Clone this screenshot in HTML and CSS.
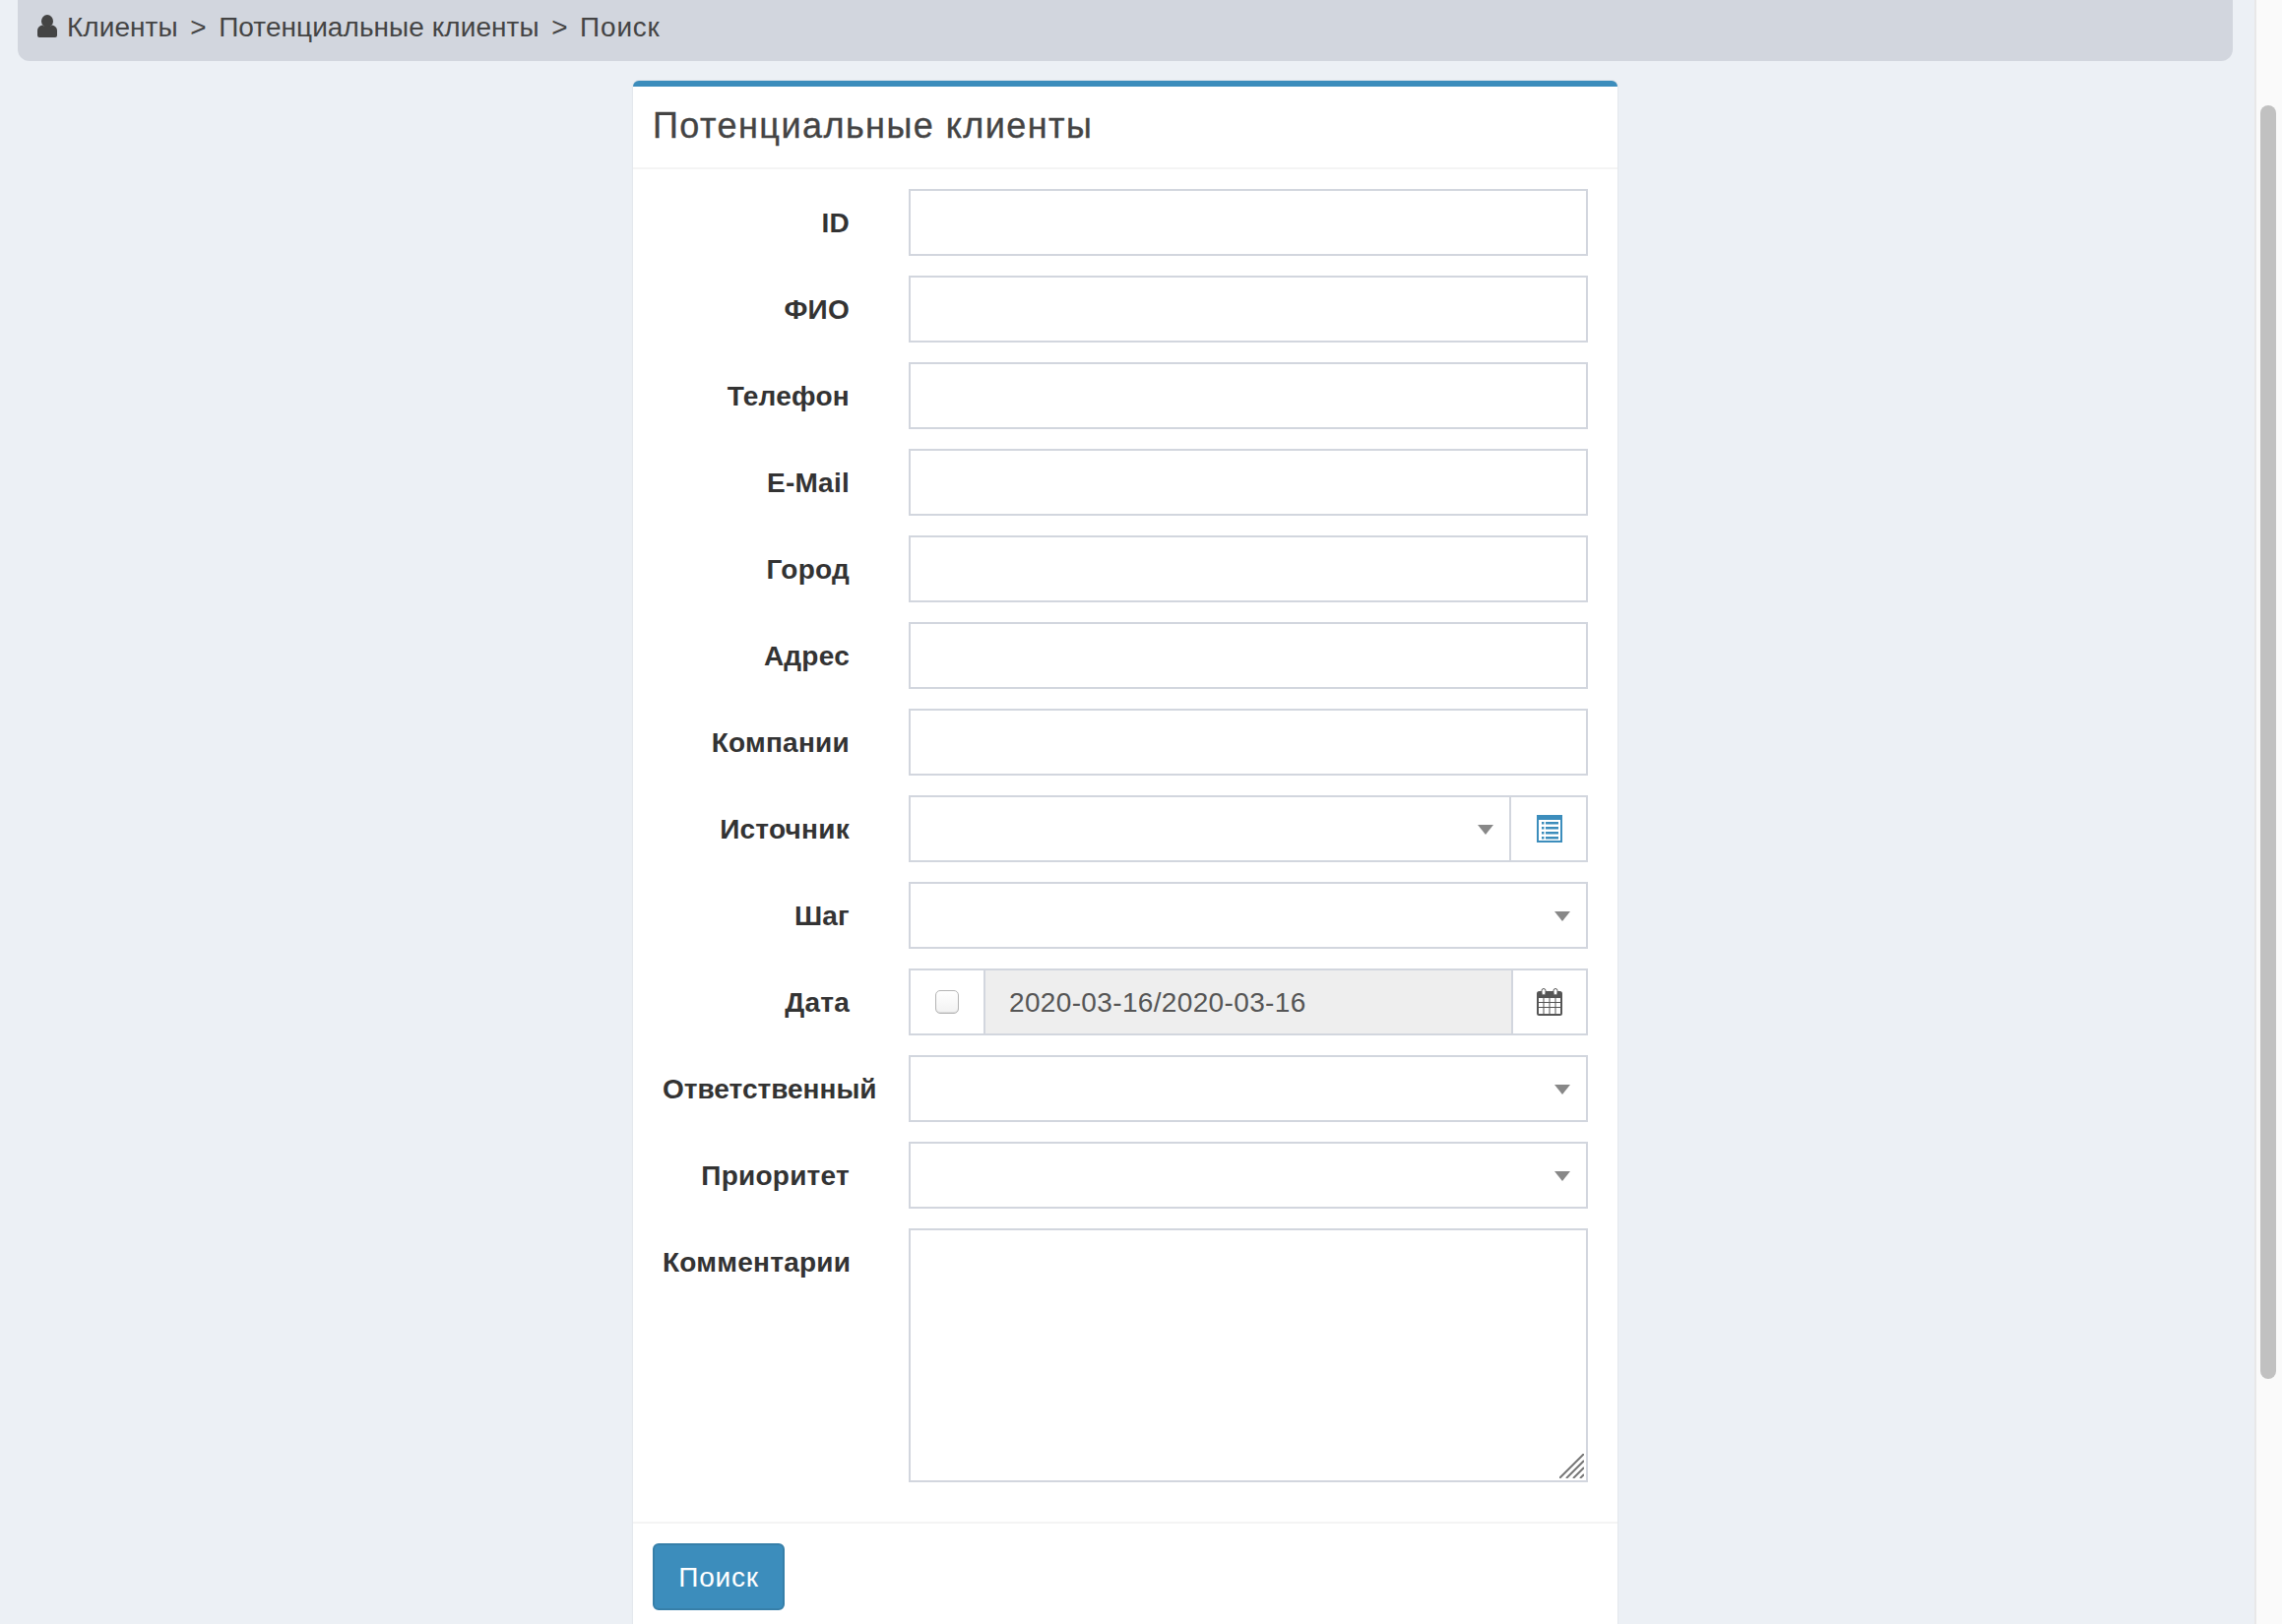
FILE: index.html
```html
<!DOCTYPE html>
<html lang="ru">
<head>
<meta charset="utf-8">
<title>Поиск</title>
<link rel="stylesheet" href="styles.css">
</head>
<body>
<div class="page">
  <main class="content">
    <nav class="crumbs">
      <svg class="crumb-icon" viewBox="0 0 20 23" aria-hidden="true"><ellipse cx="10" cy="6.500" rx="6" ry="6.500"/><path d="M2 23a2 2 0 0 1-2-2v-5c0-3 2-4.500 5-5.500 1.500 1 3 1.500 5 1.500s3.500-.5 5-1.500c3 1 5 2.500 5 5.500v5a2 2 0 0 1-2 2z"/></svg>
      <span>Клиенты</span><span class="sep">&gt;</span><span>Потенциальные клиенты</span><span class="sep">&gt;</span><span class="wide">Поиск</span>
    </nav>
    <section class="box">
      <header class="box-header"><h3 class="box-title">Потенциальные клиенты</h3></header>
      <form class="box-body">
        <div class="row"><label class="lbl">ID</label><input class="ctl" type="text"></div>
        <div class="row"><label class="lbl">ФИО</label><input class="ctl" type="text"></div>
        <div class="row"><label class="lbl">Телефон</label><input class="ctl" type="text"></div>
        <div class="row"><label class="lbl">E-Mail</label><input class="ctl" type="text"></div>
        <div class="row"><label class="lbl">Город</label><input class="ctl" type="text"></div>
        <div class="row"><label class="lbl">Адрес</label><input class="ctl" type="text"></div>
        <div class="row"><label class="lbl">Компании</label><input class="ctl" type="text"></div>
        <div class="row"><label class="lbl">Источник</label>
          <div class="ctl group">
            <div class="select"><i class="caret"></i></div>
            <div class="addon addon-list">
              <svg class="ico" viewBox="0 0 26 28" aria-hidden="true"><rect width="26" height="28" fill="#3c8dbc"/><rect x="2" y="5" width="22" height="21" fill="#fff"/><g fill="#3c8dbc"><rect x="5" y="7" width="2.500" height="2.500"/><rect x="9" y="7" width="13" height="2.500"/><rect x="5" y="12" width="2.500" height="2.500"/><rect x="9" y="12" width="13" height="2.500"/><rect x="5" y="17" width="2.500" height="2.500"/><rect x="9" y="17" width="13" height="2.500"/><rect x="5" y="22" width="2.500" height="2.500"/><rect x="9" y="22" width="13" height="2.500"/></g></svg>
            </div>
          </div>
        </div>
        <div class="row"><label class="lbl">Шаг</label><div class="ctl select"><i class="caret"></i></div></div>
        <div class="row"><label class="lbl">Дата</label>
          <div class="ctl group">
            <div class="check-cell"><span class="check"></span></div>
            <div class="date">2020-03-16/2020-03-16</div>
            <div class="addon addon-cal">
              <svg class="ico" viewBox="0 0 26 28" aria-hidden="true"><path fill="#555" d="M2.500 3H5v3.500h4V3h8v3.500h4V3h2.500A2.500 2.500 0 0 1 26 5.500v20a2.500 2.500 0 0 1-2.500 2.500h-21A2.500 2.500 0 0 1 0 25.500v-20A2.500 2.500 0 0 1 2.500 3z"/><rect x="5" y=".5" width="4" height="6.500" rx="2" fill="#fff" stroke="#555" stroke-width="1"/><rect x="17" y=".5" width="4" height="6.500" rx="2" fill="#fff" stroke="#555" stroke-width="1"/><g fill="#fff"><rect x="2" y="10" width="4.500" height="4"/><rect x="7.500" y="10" width="5" height="4"/><rect x="13.500" y="10" width="5" height="4"/><rect x="19.500" y="10" width="4.500" height="4"/><rect x="2" y="15" width="4.500" height="4"/><rect x="7.500" y="15" width="5" height="4"/><rect x="13.500" y="15" width="5" height="4"/><rect x="19.500" y="15" width="4.500" height="4"/><rect x="2" y="20" width="4.500" height="6"/><rect x="7.500" y="20" width="5" height="6"/><rect x="13.500" y="20" width="5" height="6"/><rect x="19.500" y="20" width="4.500" height="6"/></g></svg>
            </div>
          </div>
        </div>
        <div class="row"><label class="lbl lbl-tight">Ответственный</label><div class="ctl select"><i class="caret"></i></div></div>
        <div class="row"><label class="lbl">Приоритет</label><div class="ctl select"><i class="caret"></i></div></div>
        <div class="row"><label class="lbl">Комментарии</label>
          <div class="area-wrap">
            <textarea class="ctl area"></textarea>
            <svg class="grip" viewBox="0 0 25 25" aria-hidden="true"><path d="M0 25 25 0M7 25 25 7M14 25 25 14M21 25l4-4" stroke="#777" stroke-width="2" fill="none"/></svg>
          </div>
        </div>
      </form>
      <footer class="box-footer"><button class="btn" type="button">Поиск</button></footer>
    </section>
  </main>
  <aside class="scrollbar"><div class="thumb"></div></aside>
</div>
</body>
</html>
```
FILE: styles.css
```css
* { box-sizing: border-box; }
html, body { margin: 0; height: 100%; overflow: hidden; }
body {
  background: #ecf0f5;
  font-family: "Liberation Sans", Arial, sans-serif;
  font-size: 28px;
  color: #333;
}
.page { display: flex; height: 1650px; overflow: hidden; }
.content { flex: 1; padding: 0 22px 0 18px; min-width: 0; }
.crumbs {
  display: flex;
  align-items: center;
  height: 62px;
  padding: 0 0 6px 20px;
  background: #d2d6de;
  border-radius: 0 0 12px 12px;
  color: #444;
  line-height: 54px;
  letter-spacing: .06px;
}
.crumb-icon { width: 20px; height: 23px; fill: #444; margin: 0 10px 3px 0; }
.sep { margin: 0 12.500px; }
.wide { letter-spacing: .8px; }
.box {
  width: 1000px;
  margin: 20px auto 0;
  background: #fff;
  border-top: 6px solid #3c8dbc;
  border-radius: 6px 6px 0 0;
  box-shadow: 0 0 2px rgba(0, 0, 0, .12);
}
.box-header {
  height: 84px;
  padding: 0 20px 2px;
  display: flex;
  align-items: center;
  border-bottom: 2px solid #f4f4f4;
}
.box-title {
  margin: 0;
  font-size: 36px;
  font-weight: 400;
  color: #444;
  line-height: 40px;
  letter-spacing: 1.450px;
  -webkit-text-stroke: .35px #444;
}
.box-body { padding: 20px 20px 0; display: flex; flex-direction: column; gap: 20px; }
.row { display: flex; }
.lbl {
  width: 190px;
  margin-left: 10px;
  margin-right: 60px;
  flex: none;
  height: 68px;
  line-height: 70px;
  text-align: right;
  font-weight: 700;
  white-space: nowrap;
  color: #333;
  letter-spacing: .25px;
}
.lbl-tight { letter-spacing: 0; }
.ctl {
  display: flex;
  width: 690px;
  height: 68px;
  flex: none;
  background: #fff;
  border: 2px solid #d2d6de;
  border-radius: 0;
  padding: 0;
  margin: 0;
  outline: 0;
}
.select {
  flex: 1;
  display: flex;
  align-items: center;
  justify-content: flex-end;
  padding: 2px 16px 0 0;
}
.ctl.select { flex: none; padding: 2px 16px 0 0; }
.caret {
  width: 0;
  height: 0;
  border-style: solid;
  border-width: 10px 8px 0;
  border-color: #888 transparent transparent;
}
.group { align-items: stretch; }
.addon { flex: none; display: flex; align-items: center; justify-content: center; border-left: 2px solid #d2d6de; }
.addon-list { width: 78px; padding-left: 1px; }
.addon-cal { width: 76px; }
.ico { width: 26px; height: 28px; display: block; }
.check-cell { flex: none; width: 76px; display: flex; align-items: center; justify-content: center; border-right: 2px solid #d2d6de; }
.check {
  width: 24px;
  height: 24px;
  border: 1px solid #b5b5b5;
  border-radius: 5px;
  background: linear-gradient(#fff, #f2f2f2);
  box-shadow: inset 0 -1px 1px rgba(0, 0, 0, .1);
}
.date { flex: 1; min-width: 0; background: #eee; color: #555; line-height: 66px; padding-left: 24px; letter-spacing: .35px; }
.area-wrap { position: relative; width: 690px; height: 258px; flex: none; }
.area { display: block; height: 258px; resize: none; }
.grip { position: absolute; right: 4px; bottom: 4px; width: 25px; height: 25px; }
.box-footer {
  margin-top: 40px;
  border-top: 2px solid #f4f4f4;
  padding: 20px;
}
.btn {
  display: block;
  width: 134px;
  height: 68px;
  padding: 2px 0 0;
  background: #3c8dbc;
  border: 2px solid #367fa9;
  border-radius: 6px;
  color: #fff;
  font: inherit;
  letter-spacing: .8px;
}
.scrollbar {
  flex: none;
  width: 28px;
  height: 1650px;
  background: #fafafa;
  border-left: 2px solid #e8e8e8;
  padding-top: 107px;
  padding-left: 4px;
}
.thumb { width: 16px; height: 1294px; background: #c1c1c1; border-radius: 8px; }
```
